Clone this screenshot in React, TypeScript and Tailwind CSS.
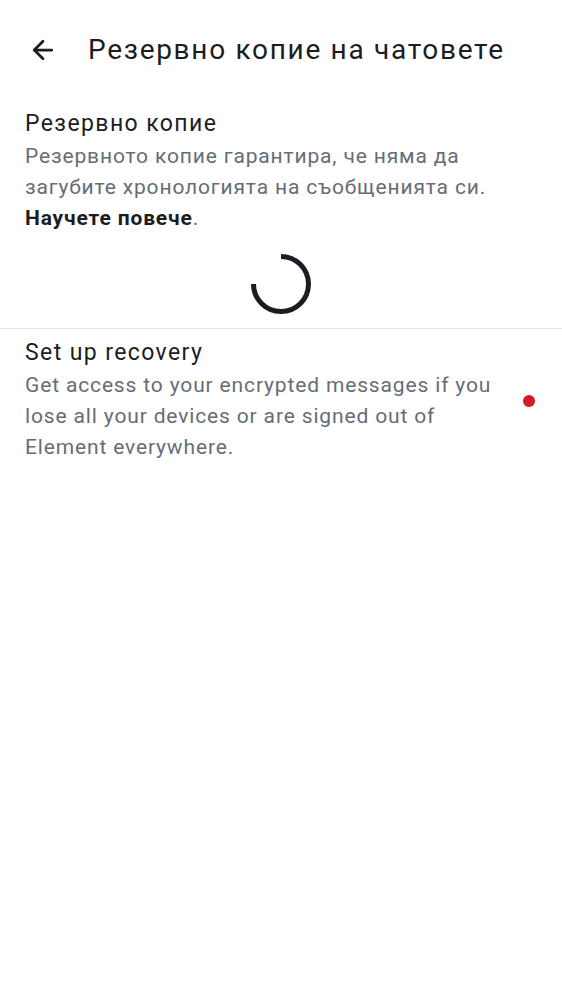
import { ArrowLeft } from "lucide-react";

const font = { fontFamily: "Roboto, 'Noto Sans', sans-serif" };

function Spinner() {
  return (
    <svg width="64" height="64" viewBox="0 0 64 64">
      <path
        d="M32 4.5 A27.5 27.5 0 1 1 4.5 32"
        fill="none"
        stroke="#1b1d22"
        strokeWidth="5"
      />
    </svg>
  );
}

export default function App() {
  return (
    <div className="min-h-[1000px] w-[562px] bg-white text-[#1b1d22]" style={font}>
      {/* top bar */}
      <div className="flex h-[100px] items-center pl-[28px]">
        <ArrowLeft size={30} strokeWidth={2.2} className="text-[#1b1d22]" />
        <h1 className="ml-[30px] text-[28px] leading-none tracking-[1.7px]">
          Резервно копие на чатовете
        </h1>
      </div>

      <div className="px-[25px] pt-[9px]">
        <div className="mb-[2px] text-[23px] leading-[30px] tracking-[1.4px]">Резервно копие</div>
        <p className="text-[21px] leading-[31px] tracking-[0.85px] text-[#656d77]">
          Резервното копие гарантира, че няма да загубите хронологията на съобщенията си.
          <br />
          <span className="font-bold text-[#1b1d22]">Научете повече</span>.
        </p>
      </div>

      <div className="flex justify-center pt-[18px] pb-[12px]">
        <Spinner />
      </div>

      <div className="h-px bg-[#e1e6ec]" />

      <div className="flex items-center pl-[25px] pr-[27px] pt-[9px]">
        <div className="flex-1">
          <div className="mb-[2px] text-[23px] leading-[30px] tracking-[1.4px]">Set up recovery</div>
          <p className="text-[21px] leading-[31px] tracking-[0.85px] text-[#656d77]">
            Get access to your encrypted messages if you lose all your devices or are signed out of
            Element everywhere.
          </p>
        </div>
        <span className="ml-[30px] h-[12px] w-[12px] rounded-full bg-[#d51928]" />
      </div>
    </div>
  );
}
